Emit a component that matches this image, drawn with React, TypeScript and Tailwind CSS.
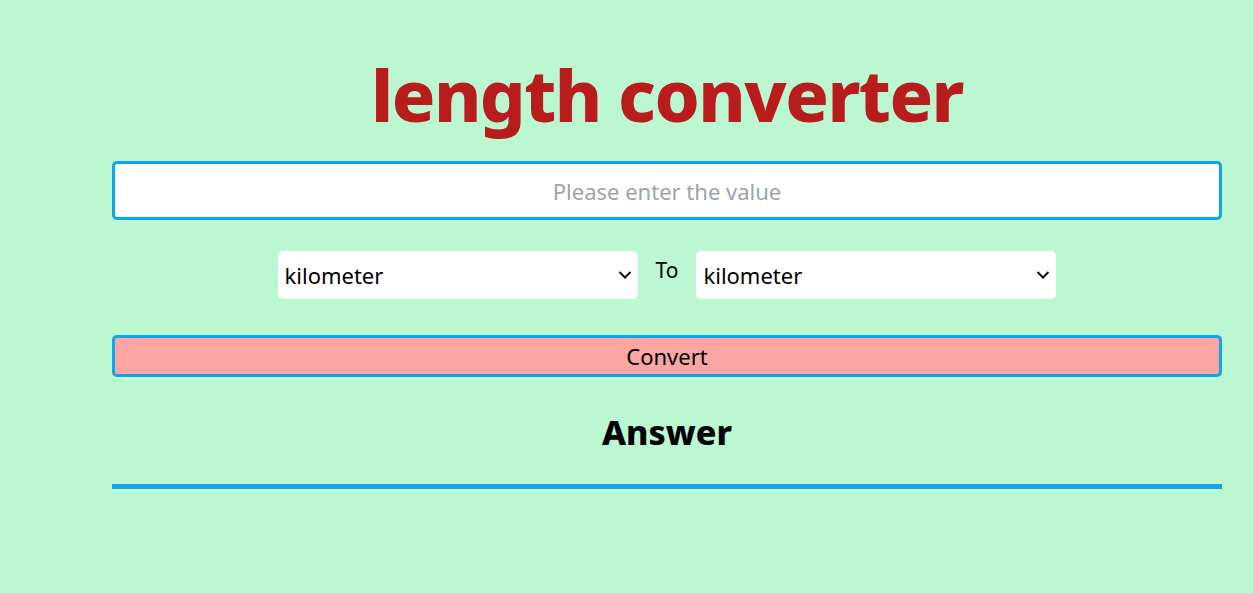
import React from "react";

function Chevron() {
  return (
    <svg width="14" height="9" viewBox="0 0 14 9" className="absolute right-[6px] top-1/2 -translate-y-1/2 pointer-events-none">
      <path d="M1.5 1.5 L7 7 L12.5 1.5" fill="none" stroke="#111" strokeWidth="2" />
    </svg>
  );
}

function Select() {
  return (
    <div className="relative w-[360px] h-[48px]">
      <select
        defaultValue="kilometer"
        className="appearance-none w-full h-full bg-white rounded-[5px] pl-[7px] pr-6 text-[22px] text-black outline-none"
        style={{ fontFamily: "'Noto Sans', sans-serif" }}
      >
        <option>kilometer</option>
        <option>meter</option>
        <option>centimeter</option>
        <option>millimeter</option>
        <option>mile</option>
      </select>
      <Chevron />
    </div>
  );
}

export default function App() {
  return (
    <div
      className="min-h-[593px] w-full bg-[#bbf7d0] overflow-hidden"
      style={{ fontFamily: "'Noto Sans', 'Open Sans', sans-serif" }}
    >
      <div className="ml-[112px] w-[1110px] flex flex-col items-center">
        <h1 className="mt-[58px] text-[72px] leading-[72px] font-extrabold text-[#b91c1c] tracking-[-1.5px]">
          length converter
        </h1>
        <input
          type="text"
          placeholder="Please enter the value"
          className="mt-[31px] w-full h-[59px] bg-white border-[3px] border-[#0ea5e9] rounded-[5px] text-center text-[22px] text-black placeholder:text-[#9ca3af] outline-none"
        />
        <div className="mt-[31px] flex items-center gap-[18px]">
          <Select />
          <span className="text-[21px] text-black -mt-[8px]">To</span>
          <Select />
        </div>
        <button className="mt-[36px] w-full h-[42px] bg-[#fca5a5] border-[3px] border-[#0ea5e9] rounded-[5px] text-[22px] text-black leading-none">
          Convert
        </button>
        <h2 className="mt-[35px] text-[34px] leading-[40px] font-extrabold text-black">Answer</h2>
        <div className="mt-[32px] w-full h-[5px] bg-[#0ea5e9]" />
      </div>
    </div>
  );
}
